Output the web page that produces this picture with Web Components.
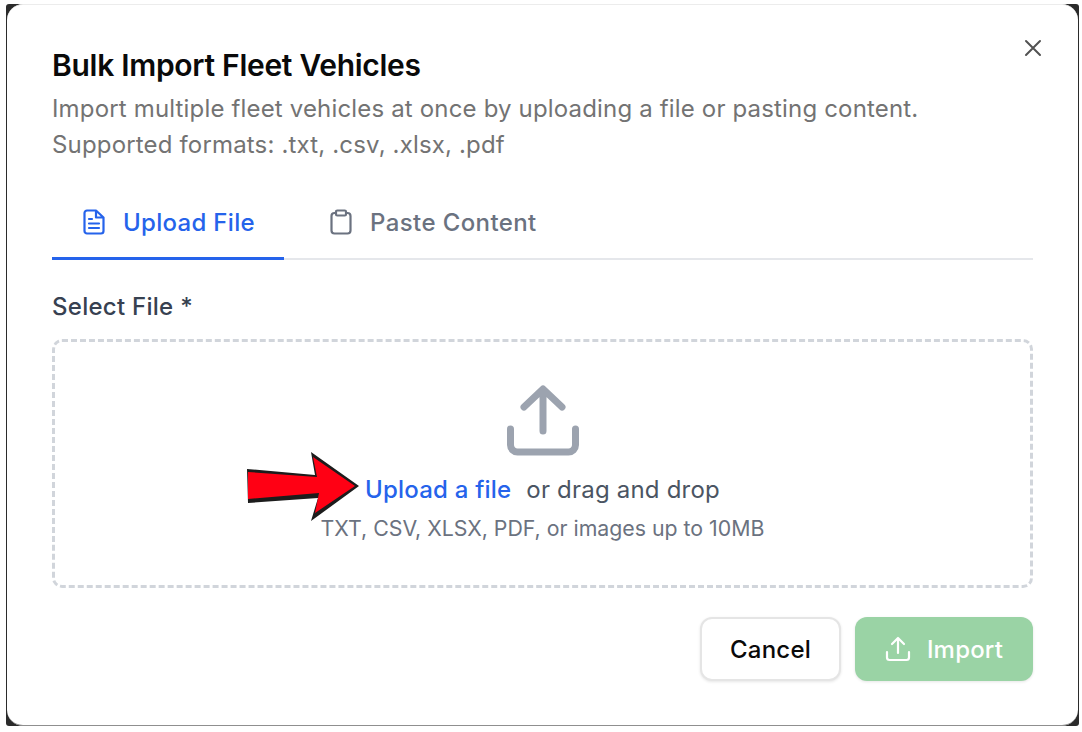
<!DOCTYPE html>
<html>
<head>
<meta charset="utf-8">
<title>Bulk Import Fleet Vehicles</title>
<style>
  html, body { margin: 0; padding: 0; background: #fff; }
  body { width: 1082px; height: 732px; overflow: hidden; font-family: Inter, "Liberation Sans", sans-serif; }
</style>
</head>
<body>
<fleet-dialog heading="Bulk Import Fleet Vehicles">
  <span slot="desc">Import multiple fleet vehicles at once by uploading a file or pasting content.</span>
  <span slot="desc">Supported formats: .txt, .csv, .xlsx, .pdf</span>
  <dialog-tabs></dialog-tabs>
  <drop-zone label="Select File *"></drop-zone>
  <ui-button slot="actions">Cancel</ui-button>
  <ui-button slot="actions" kind="import">Import</ui-button>
</fleet-dialog>

<script>
class FleetDialog extends HTMLElement {
  constructor() {
    super();
    this.attachShadow({ mode: 'open' });
  }
  connectedCallback() {
    this.shadowRoot.innerHTML = `
    <style>
      :host { display: block; margin: 4px 3px 6px 6px; background: #2b2b2b; border-radius: 3px; }
      .card {
        box-sizing: border-box;
        height: 722px;
        margin-left: 1px;
        margin-right: 1px;
        padding: 40px 45px 0 45px;
        background: #fff;
        border-radius: 16px;
        border-top: 1px solid #ececec;
        border-bottom: 1px solid #8f8f8f;
        position: relative;
      }
      h1 { margin: 0; font-size: 30px; line-height: 40px; font-weight: 600; letter-spacing: -0.29px; color: #0a0a0a; }
      .desc { margin-top: 6px; display: flex; flex-direction: column; font-size: 24px; line-height: 36px; letter-spacing: 0.165px; color: #737373; }
      ::slotted([slot=desc]) { display: block; }
      .close { position: absolute; top: 32px; right: 34px; width: 22px; height: 22px; color: #525252; }
      .actions { display: flex; justify-content: flex-end; gap: 14px; margin-top: 29px; }
    </style>
    <div class="card">
      <h1>${this.getAttribute('heading')}</h1>
      <div class="desc"><slot name="desc"></slot></div>
      <svg class="close" viewBox="0 0 22 22" fill="none" stroke="currentColor" stroke-width="2" stroke-linecap="round"><path d="M4 4 L18 18 M18 4 L4 18"/></svg>
      <slot></slot>
      <div class="actions"><slot name="actions"></slot></div>
    </div>`;
  }
}
customElements.define('fleet-dialog', FleetDialog);

class DialogTabs extends HTMLElement {
  constructor() {
    super();
    this.attachShadow({ mode: 'open' });
  }
  connectedCallback() {
    this.shadowRoot.innerHTML = `
    <style>
      :host { display: flex; margin-top: 29px; height: 68px; box-sizing: border-box; border-bottom: 2px solid #e5e7eb; font-size: 24px; font-weight: 500; letter-spacing: 0.3px; }
      .tab { display: flex; align-items: center; height: 68px; box-sizing: border-box; margin-bottom: -2px; color: #6b7280; padding-bottom: 5px; border-bottom: 3px solid transparent; }
      .tab.on { color: #2563eb; border-bottom-color: #2563eb; width: 232px; padding-left: 31px; gap: 18px; }
      .tab + .tab { padding-left: 46px; gap: 18px; letter-spacing: 0.4px; }
      svg { width: 22px; height: 26px; }
    </style>
    <div class="tab on">
      <svg viewBox="0 0 22 26" fill="none" stroke="currentColor" stroke-width="2.2" stroke-linecap="round" stroke-linejoin="round"><path d="M4 1.5 H13 L20.5 8.5 V22 a2.5 2.5 0 0 1 -2.5 2.5 H4 a2.5 2.5 0 0 1 -2.5 -2.5 V4 a2.5 2.5 0 0 1 2.5 -2.5 Z M13 1.5 V8.5 H20.5"/><path d="M6 10 H9 M6 14.5 H16 M6 19 H16"/></svg>
      <span>Upload File</span>
    </div>
    <div class="tab">
      <svg viewBox="0 0 22 26" fill="none" stroke="currentColor" stroke-width="2.2" stroke-linecap="round" stroke-linejoin="round"><path d="M6 4 H4.5 a3 3 0 0 0 -3 3 V21.5 a3 3 0 0 0 3 3 H17.5 a3 3 0 0 0 3 -3 V7 a3 3 0 0 0 -3 -3 H16"/><rect x="6" y="1.5" width="10" height="5" rx="1.2"/></svg>
      <span>Paste Content</span>
    </div>`;
  }
}
customElements.define('dialog-tabs', DialogTabs);

class DropZone extends HTMLElement {
  constructor() {
    super();
    this.attachShadow({ mode: 'open' });
  }
  connectedCallback() {
    this.shadowRoot.innerHTML = `
    <style>
      :host { display: block; margin-top: 29px; }
      label { display: block; font-size: 24px; line-height: 36px; font-weight: 500; letter-spacing: 0.27px; color: #374151; }
      .zone {
        position: relative;
        box-sizing: border-box;
        height: 249px;
        margin-top: 14px;
        border: 3px dashed #d1d5db;
        border-radius: 10px;
        display: flex; flex-direction: column; align-items: center;
        padding-top: 43px;
      }
      .cloud { width: 74px; height: 72px; color: #9ca3af; display: block; }
      .line { margin-top: 15px; font-size: 24px; line-height: 36px; letter-spacing: 0.2px; color: #4b5563; display: flex; gap: 15px; }
      .line b { font-weight: 500; color: #2563eb; }
      .hint { margin-top: 5px; font-size: 21.3px; line-height: 30px; color: #6b7280; }
      .arrow { position: absolute; left: 192px; top: 125px; width: 116px; height: 72px; overflow: visible; }
    </style>
    <label>${this.getAttribute('label')}</label>
    <div class="zone">
      <svg class="cloud" viewBox="0 0 74 72" fill="none" stroke="currentColor" stroke-width="7" stroke-linecap="round" stroke-linejoin="round"><path d="M4.5 44 V60 a7 7 0 0 0 7 7 H62.5 a7 7 0 0 0 7 -7 V44"/><path d="M37 46 V4.5 M18 22 L37 4 L56 22"/></svg>
      <div class="line"><b>Upload a file</b><span>or drag and drop</span></div>
      <div class="hint">TXT, CSV, XLSX, PDF, or images up to 10MB</div>
      <svg class="arrow" viewBox="0 0 116 72">
        <polygon points="0,2 68,8 64,-15 112,19 64,54 71,31 1,36" fill="#1c1c1c"/>
        <polygon points="1,5 70,10 66,-10 108,19 68,46 72,26 1,32" fill="#ff0014"/>
      </svg>
    </div>`;
  }
}
customElements.define('drop-zone', DropZone);

class UiButton extends HTMLElement {
  constructor() {
    super();
    this.attachShadow({ mode: 'open' });
  }
  connectedCallback() {
    const imp = this.getAttribute('kind') === 'import';
    this.shadowRoot.innerHTML = `
    <style>
      :host { display: block; }
      button {
        box-sizing: border-box;
        display: flex; align-items: center; justify-content: center; gap: 16px;
        height: 64px;
        font: 500 24px Inter, "Liberation Sans", sans-serif;
        letter-spacing: 0.2px;
        border-radius: 12px;
        box-shadow: 0 1px 3px rgba(0,0,0,.1);
        padding: 0;
      }
      .plain { width: 141px; background: #fff; border: 2px solid #e5e5e5; color: #0a0a0a; }
      .go { width: 178px; background: #9ad3a5; border: 0; color: #fff; }
      svg { width: 26px; height: 26px; }
    </style>
    <button class="${imp ? 'go' : 'plain'}">
      ${imp ? '<svg viewBox="0 0 26 26" fill="none" stroke="currentColor" stroke-width="2.2" stroke-linecap="round" stroke-linejoin="round"><path d="M2 16 V21.5 a2.5 2.5 0 0 0 2.5 2.5 H21.5 a2.5 2.5 0 0 0 2.5 -2.5 V16"/><path d="M13 17 V2 M7 8 L13 2 L19 8"/></svg>' : ''}
      <span><slot></slot></span>
    </button>`;
  }
}
customElements.define('ui-button', UiButton);
</script>
</body>
</html>
